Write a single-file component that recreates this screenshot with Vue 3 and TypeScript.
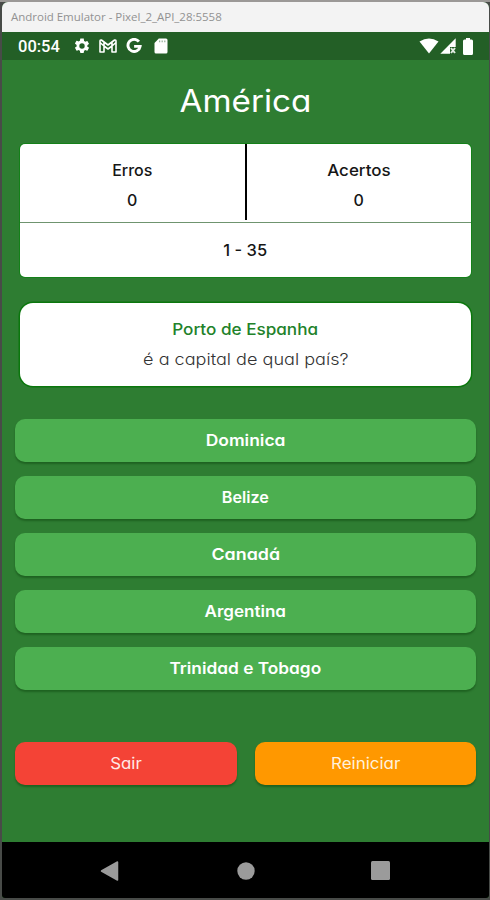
<script setup lang="ts">
interface Answer {
  label: string
  stretch: number
}

const answers: Answer[] = [
  { label: 'Dominica', stretch: 1.09 },
  { label: 'Belize', stretch: 1.01 },
  { label: 'Canadá', stretch: 1.115 },
  { label: 'Argentina', stretch: 1.065 },
  { label: 'Trinidad e Tobago', stretch: 1.08 },
]
const wrong = 0
const right = 0
const current = 1
const total = 35
</script>

<template>
  <div class="desktop">
    <div class="window">
      <header class="titlebar"><span>Android Emulator - Pixel_2_API_28:5558</span></header>
      <div class="statusbar">
        <span class="clock">00:54</span>
        <svg class="gear" width="18" height="18" viewBox="0 0 24 24" fill="#fff">
          <path d="M19.14 12.94c.04-.3.06-.61.06-.94s-.02-.64-.07-.94l2.03-1.58a.49.49 0 0 0 .12-.61l-1.92-3.32a.49.49 0 0 0-.59-.22l-2.39.96a7 7 0 0 0-1.62-.94l-.36-2.54A.48.48 0 0 0 13.92 2h-3.84a.48.48 0 0 0-.47.41l-.36 2.54a7 7 0 0 0-1.62.94l-2.39-.96a.48.48 0 0 0-.59.22L2.74 8.47a.48.48 0 0 0 .12.61l2.03 1.58a7 7 0 0 0-.02 1.88l-2.03 1.58a.49.49 0 0 0-.12.61l1.92 3.32c.12.22.37.29.59.22l2.39-.96c.5.38 1.03.7 1.62.94l.36 2.54c.05.24.24.41.48.41h3.84c.24 0 .44-.17.47-.41l.36-2.54a7 7 0 0 0 1.62-.94l2.39.96c.22.08.47 0 .59-.22l1.92-3.32a.48.48 0 0 0-.12-.61zM12 15.6A3.6 3.6 0 1 1 12 8.4a3.6 3.6 0 0 1 0 7.2z" />
        </svg>
        <svg class="mail" width="18" height="14" viewBox="0 0 18 14" fill="none" stroke="#fff" stroke-width="1.6" stroke-linejoin="round">
          <path d="M1 2.2Q1 .8 2.4 1L9 6 15.6 1Q17 .8 17 2.2V13H13V7L9 10 5 7V13H1ZM5 3V7M13 3V7M1 3.5 5 7M17 3.5 13 7" />
        </svg>
        <svg class="google" width="16" height="16" viewBox="0 0 16 16" fill="none" stroke="#fff" stroke-width="2.9">
          <path d="M12.9 3.7A6.1 6.1 0 1 0 14.1 8.4H8.1" />
        </svg>
        <svg class="sd" width="14" height="16" viewBox="0 0 14 16">
          <path fill="#fff" d="M4.800.5H12q1.500 0 1.500 1.500v12q0 1.500-1.500 1.500H2Q.5 15.500.5 14V5Z" />
          <path d="M5.600 2.500v1.800M8.200 2.500v1.800M10.800 2.500v1.800" stroke="#9cb59f" stroke-width="1.300" />
        </svg>
        <span class="grow"></span>
        <svg class="wifi" width="20" height="16" viewBox="0 0 20 16"><path fill="#fff" d="M.5 3.500Q10-2.500 19.500 3.500L10 15.500Z" /></svg>
        <svg class="signal" width="16" height="16" viewBox="0 0 16 16">
          <path fill="#fff" d="M.3 15.700 15.700.3V9H10V15.700Z" />
          <path d="m11 10 4 5M15 10l-4 5" stroke="#e3ece3" stroke-width="2" />
        </svg>
        <svg class="battery" width="10" height="17" viewBox="0 0 10 17"><path fill="#fff" d="M3 0h4v1.500h1.500Q10 1.500 10 3v12.500Q10 17 8.500 17h-7Q0 17 0 15.500V3q0-1.500 1.500-1.500H3Z" /></svg>
      </div>

      <main class="app">
        <h1><span class="wide t-title">América</span></h1>

        <section class="score">
          <div class="counts">
            <div class="count"><span>Erros</span><span>{{ wrong }}</span></div>
            <div class="count"><span class="wide t-right">Acertos</span><span>{{ right }}</span></div>
          </div>
          <div class="progress"><span class="wide t-progress">{{ current }} - {{ total }}</span></div>
        </section>

        <section class="question">
          <strong><span class="wide t-city">Porto de Espanha</span></strong>
          <p><span class="wide t-ask">é a capital de qual país?</span></p>
        </section>

        <div class="answers">
          <button v-for="a in answers" :key="a.label" type="button">
            <span class="wide" :style="{ transform: `scaleX(${a.stretch})` }">{{ a.label }}</span>
          </button>
        </div>

        <div class="actions">
          <button class="exit" type="button"><span class="wide t-exit">Sair</span></button>
          <button class="restart" type="button"><span class="wide t-restart">Reiniciar</span></button>
        </div>
      </main>

      <nav class="navbar">
        <svg width="20" height="22" viewBox="0 0 20 22"><path d="M17.500 2v18L1.500 11Z" fill="#9b9b9b" stroke="#9b9b9b" stroke-width="1.500" stroke-linejoin="round" /></svg>
        <svg width="18" height="18" viewBox="0 0 18 18"><circle cx="9" cy="9" r="8.700" fill="#9b9b9b" /></svg>
        <svg width="19" height="19" viewBox="0 0 19 19"><rect width="19" height="19" rx="1.500" fill="#9b9b9b" /></svg>
      </nav>
    </div>
  </div>
</template>

<style>
body {
  margin: 0;
}
</style>

<style scoped>
* {
  box-sizing: border-box;
}
.desktop {
  width: 490px;
  height: 900px;
  padding: 2px 1px 2px 2px;
  background: linear-gradient(#9b9896 0 2px, #484b48 2px);
  font-family: Inter, "Open Sans", sans-serif;
  font-feature-settings: "cv11", "ss03";
  overflow: hidden;
}
.window {
  display: flex;
  flex-direction: column;
  height: 896px;
  background: #2e7d32;
  border-radius: 6px 6px 3px 3px;
  overflow: hidden;
}
.titlebar {
  height: 30px;
  padding-left: 9px;
  background: #f3f3f3;
  color: #929292;
  font: 11.500px/29px "Open Sans", sans-serif;
  letter-spacing: -0.02px;
  white-space: nowrap;
}
.statusbar {
  display: flex;
  align-items: center;
  height: 28px;
  padding: 0 16px;
  background: #235f26;
  color: #fff;
}
.clock {
  width: 43px;
  font: 500 16.5px/29px Roboto, sans-serif;
}
.gear { margin-left: 12px; }
.mail { margin-left: 8px; }
.google { margin-left: 9px; }
.sd { margin-left: 12px; }
.grow { flex: 1; }
.signal { margin-left: 1px; }
.battery { margin-left: 7px; }
.app {
  height: 782px;
  padding: 22px 13px 0;
}
h1 {
  margin: 0;
  color: #fff;
  font-size: 30.500px;
  font-weight: 400;
  line-height: 37px;
  text-align: center;
}
.wide { display: inline-block; }
.t-title { transform: scaleX(1.09); }
.t-right { transform: scaleX(1.06); }
.t-progress { transform: scaleX(1.03); }
.t-city { transform: scaleX(1.07); }
.t-ask { transform: scaleX(1.095); }
.t-exit { transform: scaleX(1.05); }
.t-restart { transform: scaleX(1.06); }
.score {
  margin: 25px 5px 0;
  height: 133px;
  background: #fff;
  border-radius: 5px;
  box-shadow: 0 0 0 1px #148019;
  color: #161616;
  font-size: 16px;
  font-weight: 500;
}
.counts {
  display: flex;
  height: 79px;
  padding-bottom: 2px;
  border-bottom: 1px solid #6f946f;
}
.count {
  flex: 1;
  display: flex;
  flex-direction: column;
  align-items: center;
  padding-top: 12px;
  line-height: 29.500px;
}
.count:first-child {
  border-right: 2px solid #000;
}
.progress {
  line-height: 54px;
  text-align: center;
}
.question {
  margin: 26px 5px 0;
  height: 83px;
  padding-top: 11px;
  background: #fff;
  border-radius: 13px;
  box-shadow: 0 0 0 1.500px #0b770d;
  font-size: 16px;
  line-height: 30px;
  text-align: center;
}
.question strong {
  display: block;
  color: #22822a;
  font-weight: 500;
}
.question p {
  margin: 0;
  color: #333;
  font-size: 16.500px;
  font-weight: 300;
}
.answers {
  display: flex;
  flex-direction: column;
  gap: 14px;
  margin-top: 33px;
}
button {
  height: 43px;
  padding: 0 0 1px;
  border: 0;
  border-radius: 10px;
  background: #4caf50;
  box-shadow: 0 2px 2px rgba(0, 50, 0, 0.35);
  color: #fff;
  font: inherit;
  font-size: 16px;
  font-weight: 600;
}
.actions {
  display: flex;
  gap: 18px;
  margin-top: 52px;
}
.actions button {
  flex: 1;
  font-weight: 400;
}
.actions .exit {
  background: #f44336;
  color: #ffe9e6;
}
.actions .restart {
  background: #ff9800;
  color: #fff1dc;
}
.navbar {
  display: flex;
  flex: 1;
  align-items: center;
  justify-content: space-between;
  padding: 1px 99px 0 98px;
  background: #000;
}
</style>
